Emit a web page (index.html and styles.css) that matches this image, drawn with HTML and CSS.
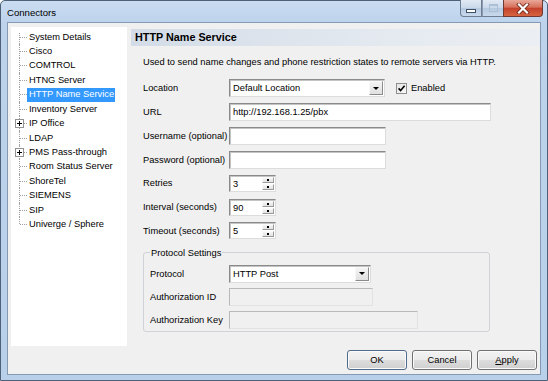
FILE: index.html
```html
<!DOCTYPE html>
<html>
<head>
<meta charset="utf-8">
<link rel="stylesheet" href="styles.css">
</head>
<body>
<div class="window">
  <div class="titlebar">
    <span class="title">Connectors</span>
    <div class="caption">
      <span class="cbtn min"><i class="min-glyph"></i></span>
      <span class="cbtn max"><i class="max-glyph"></i></span>
      <span class="cbtn close">
        <svg width="14" height="11" viewBox="0 0 14 11"><path d="M3 1.5 L11 9.5 M11 1.5 L3 9.5" stroke="#6b2418" stroke-width="3.8" stroke-linecap="square" fill="none"/><path d="M3 1.5 L11 9.5 M11 1.5 L3 9.5" stroke="#fff" stroke-width="2.2" stroke-linecap="square" fill="none"/></svg>
      </span>
    </div>
  </div>
  <div class="client">
    <div class="main">
      <ul class="tree">
        <li><span class="t">System Details</span></li>
        <li><span class="t">Cisco</span></li>
        <li><span class="t">COMTROL</span></li>
        <li><span class="t">HTNG Server</span></li>
        <li class="sel"><span class="t">HTTP Name Service</span></li>
        <li><span class="t">Inventory Server</span></li>
        <li class="has"><span class="plus"></span><span class="t">IP Office</span></li>
        <li><span class="t">LDAP</span></li>
        <li class="has"><span class="plus"></span><span class="t">PMS Pass-through</span></li>
        <li><span class="t">Room Status Server</span></li>
        <li><span class="t">ShoreTel</span></li>
        <li><span class="t">SIEMENS</span></li>
        <li><span class="t">SIP</span></li>
        <li><span class="t">Univerge / Sphere</span></li>
      </ul>
      <div class="panel">
        <div class="panel-head">HTTP Name Service</div>
        <p class="desc">Used to send name changes and phone restriction states to remote servers via HTTP.</p>
        <div class="form">
          <span class="lbl">Location</span>
          <div class="ctl-row">
            <div class="combo w-loc"><span class="val">Default Location</span><span class="arrow"></span></div>
            <span class="check"><svg width="9" height="9" viewBox="0 0 9 9"><path d="M1.6 4.4 L3.6 6.6 L7.6 1.8" stroke="#000" stroke-width="1.6" fill="none"/></svg></span>
            <span class="check-lbl">Enabled</span>
          </div>
          <span class="lbl">URL</span>
          <div class="tb w-url">http://192.168.1.25/pbx</div>
          <span class="lbl">Username (optional)</span>
          <div class="tb w-user"></div>
          <span class="lbl">Password (optional)</span>
          <div class="tb w-user"></div>
          <span class="lbl">Retries</span>
          <div class="spin"><span class="val">3</span><span class="spbtns"><i class="up"></i><i class="down"></i></span></div>
          <span class="lbl">Interval (seconds)</span>
          <div class="spin"><span class="val">90</span><span class="spbtns"><i class="up"></i><i class="down"></i></span></div>
          <span class="lbl">Timeout (seconds)</span>
          <div class="spin"><span class="val">5</span><span class="spbtns"><i class="up"></i><i class="down"></i></span></div>
        </div>
        <fieldset class="group">
          <legend>Protocol Settings</legend>
          <div class="gform">
            <span class="lbl">Protocol</span>
            <div class="combo w-proto"><span class="val">HTTP Post</span><span class="arrow"></span></div>
            <span class="lbl">Authorization ID</span>
            <div class="tb dis w-aid"></div>
            <span class="lbl">Authorization Key</span>
            <div class="tb dis w-akey"></div>
          </div>
        </fieldset>
      </div>
    </div>
    <div class="buttons">
      <span class="btn def">OK</span>
      <span class="btn">Cancel</span>
      <span class="btn"><u>A</u>pply</span>
    </div>
  </div>
</div>
</body>
</html>
```
FILE: styles.css
```css
* { box-sizing: border-box; margin: 0; padding: 0; }
html, body { width: 548px; height: 381px; overflow: hidden; }
body {
  font-family: "Liberation Sans", Arial, sans-serif;
  font-size: 9.3px;
  color: #000;
  background: #fff;
}
.window {
  width: 548px;
  height: 381px;
  border: 1px solid #4f6178;
  border-radius: 5px 5px 0 0;
  background: linear-gradient(#cadcf1 0, #bdd3ec 22px, #b9d0ea 100%);
  display: flex;
  flex-direction: column;
}
.titlebar {
  height: 21px;
  flex: none;
  display: flex;
  align-items: flex-start;
}
.title {
  font-size: 9.6px;
  line-height: 12px;
  margin: 6px 0 0 6px;
}
.caption {
  margin-left: auto;
  margin-right: 4px;
  margin-top: -1px;
  display: flex;
}
.cbtn {
  height: 17px;
  display: flex;
  align-items: center;
  justify-content: center;
  border: 1px solid #6d7d92;
  border-top: none;
}
.min {
  width: 22px;
  border-radius: 0 0 0 4px;
  background: linear-gradient(#e2eaf4, #c9d8ea 50%, #b5c9e0 52%, #c9d9ec);
}
.max {
  width: 21px;
  border-left: 1px solid #8c9bb0;
  border-right: none;
  background: linear-gradient(#e2eaf4, #c9d8ea 50%, #b5c9e0 52%, #c9d9ec);
}
.close {
  width: 40px;
  border-radius: 0 0 4px 0;
  background: linear-gradient(#e9a899, #d6705b 45%, #c4412c 52%, #d6643f);
  border-color: #6e3a33;
}
.min-glyph {
  width: 10px;
  height: 4px;
  margin-top: 5px;
  background: #fff;
  border: 1px solid #3e4f66;
}
.max-glyph {
  width: 9px;
  height: 8px;
  border: 1px solid #a9bbd1;
  border-top-width: 2px;
  opacity: .9;
}
.client {
  flex: 1;
  margin: 0 6px 5px 6px;
  background: #f0f0f0;
  border: 1px solid #8599b2;
  display: flex;
  flex-direction: column;
}
.main {
  display: flex;
  height: 323px;
  padding: 4px 0 0 3px;
  flex: none;
}
.tree {
  width: 116px;
  height: 319px;
  flex: none;
  background: #fff;
  list-style: none;
  padding-top: 2.5px;
  font-size: 9.3px;
}
.tree li {
  position: relative;
  height: 14.45px;
  line-height: 14.45px;
  padding-left: 16px;
  white-space: nowrap;
}
.tree li::before {
  content: "";
  position: absolute;
  left: 8px;
  top: 0;
  height: 100%;
  border-left: 1px dotted #a0a0a0;
}
.tree li:first-child::before { top: 3px; height: calc(100% - 3px); }
.tree li:last-child::before { height: 50%; }
.tree li::after {
  content: "";
  position: absolute;
  left: 9px;
  top: 7px;
  width: 7px;
  border-top: 1px dotted #a0a0a0;
}
.tree .t {
  display: inline-block;
  padding: 0 1px 0 2px;
  line-height: 13.5px;
}
.tree .sel .t {
  background: #3399ff;
  color: #fff;
}
.plus {
  position: absolute;
  left: 4px;
  top: 3px;
  width: 9px;
  height: 9px;
  background: #fff;
  border: 1px solid #929292;
  z-index: 1;
}
.plus::before {
  content: "";
  position: absolute;
  left: 1px;
  top: 3px;
  width: 5px;
  height: 1px;
  background: #000;
}
.plus::after {
  content: "";
  position: absolute;
  left: 3px;
  top: 1px;
  width: 1px;
  height: 5px;
  background: #000;
}
.panel {
  margin-left: 4px;
  width: 410px;
  padding-top: 2px;
}
.panel-head {
  height: 17px;
  background: linear-gradient(to right, #d3dce7, #e6ebf1 70%, #ebeef2);
  font-weight: bold;
  font-size: 10.8px;
  line-height: 17px;
  padding-left: 4px;
}
.desc {
  margin: 10px 0 0 12px;
  line-height: 12px;
  white-space: nowrap;
}
.form {
  display: grid;
  grid-template-columns: 86px auto;
  grid-auto-rows: 23.75px;
  align-items: center;
  margin: 8.6px 0 0 12px;
}
.lbl { line-height: 12px; white-space: nowrap; }
.ctl-row { display: flex; align-items: center; }
.tb, .combo, .spin {
  height: 18px;
  background: #fff;
  border: 1px solid;
  border-color: #8a8a8a #dcdcdc #dcdcdc #8a8a8a;
  box-shadow: inset 1px 1px 0 #c4c4c4;
}
.tb { padding-left: 3px; line-height: 16px; }
.tb.dis { background: #f0f0f0; border-color: #b9b9b9 #e2e2e2 #e2e2e2 #b9b9b9; box-shadow: none; }
.w-url { width: 262px; }
.w-user { width: 157px; }
.w-loc { width: 156px; }
.w-proto { width: 142px; }
.w-aid { width: 144px; }
.w-akey { width: 189px; }
.combo { display: flex; padding: 1px; }
.combo .val { flex: 1; padding-left: 2px; line-height: 14px; }
.combo .arrow {
  width: 14px;
  background: linear-gradient(#f4f4f4, #e0e0e0);
  border: 1px solid;
  border-color: #f8f8f8 #8a8a8a #8a8a8a #f8f8f8;
  display: flex;
  align-items: center;
  justify-content: center;
}
.combo .arrow::after {
  content: "";
  border-left: 3px solid transparent;
  border-right: 3px solid transparent;
  border-top: 3px solid #000;
}
.check {
  width: 11px;
  height: 11px;
  margin-left: 11px;
  border: 1px solid #8e8f8f;
  background: linear-gradient(135deg, #e4e4e4, #fafafa);
  display: flex;
  align-items: center;
  justify-content: center;
}
.check-lbl { margin-left: 4px; line-height: 12px; }
.spin {
  width: 47px;
  height: 17px;
  display: flex;
  padding: 1px;
}
.spin .val { flex: 1; padding-left: 2px; line-height: 14px; }
.spbtns { width: 12px; display: flex; flex-direction: column; gap: 1px; }
.spbtns i {
  flex: 1;
  background: linear-gradient(#f6f6f6, #e2e2e2);
  border: 1px solid;
  border-color: #fafafa #9a9a9a #9a9a9a #fafafa;
  display: flex;
  align-items: center;
  justify-content: center;
}
.spbtns i::after {
  content: "";
  width: 2px;
  height: 2px;
  background: #000;
}
.group {
  width: 347px;
  margin: 4px 0 0 12px;
  border: 1px solid #cfd3d8;
  border-radius: 3px;
  padding: 3.5px 0 0 6px;
  min-width: 0;
}
.group legend {
  padding: 0 1px;
  line-height: 12px;
}
.gform {
  display: grid;
  grid-template-columns: 79px auto;
  grid-auto-rows: 23px;
  align-items: center;
}
.buttons {
  display: flex;
  justify-content: flex-end;
  gap: 5px;
  margin-top: 4px;
  padding-right: 3px;
}
.btn {
  width: 60px;
  height: 20px;
  border: 1px solid #707070;
  border-radius: 3px;
  background: linear-gradient(#f2f2f2 0, #ebebeb 50%, #dddddd 50%, #cfcfcf 100%);
  box-shadow: inset 0 0 0 1px #fbfbfb;
  display: flex;
  align-items: center;
  justify-content: center;
  line-height: 12px;
}
.btn.def { border-color: #4f6a8a; }
```
